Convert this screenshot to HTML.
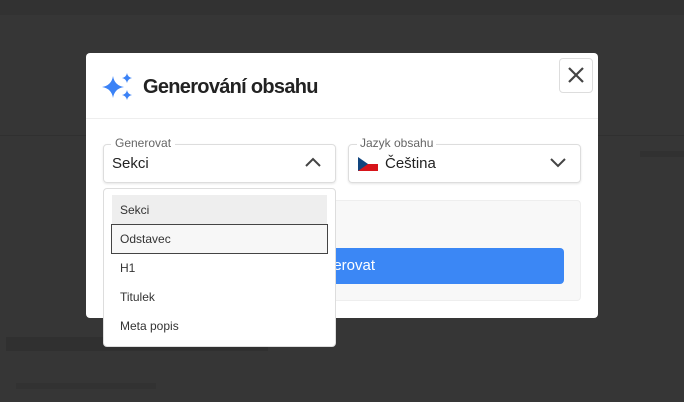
<html><head><style>
body{margin:0;width:684px;height:402px;background:#363636;font-family:"Liberation Sans",sans-serif;position:relative;overflow:hidden}
.a{position:absolute}
</style></head><body>
<div class="a" style="left:0;top:0;width:684px;height:15px;background:#323232"></div>
<div class="a" style="left:0;top:135px;width:684px;height:1px;background:#303030"></div>
<div class="a" style="left:640px;top:151px;width:44px;height:6px;background:#313131"></div>
<div class="a" style="left:6px;top:337px;width:262px;height:14px;background:#303030"></div>
<div class="a" style="left:16px;top:383px;width:140px;height:6px;background:#323232"></div>
<div class="a" style="left:86px;top:53px;width:512px;height:265px;background:#fff;border-radius:4px">
 <div class="a" style="left:0;top:65px;width:512px;height:1px;background:#eee"></div>
 <svg class="a" style="left:16px;top:20px" width="34" height="30" viewBox="0 0 34 30"><path d="M11 3 Q12.5 12.5 22 14 Q12.5 15.5 11 25 Q9.5 15.5 0 14 Q9.5 12.5 11 3Z" fill="#3b82f6"/><path d="M25 0 Q25.8 4.2 30 5 Q25.8 5.8 25 10 Q24.2 5.8 20 5 Q24.2 4.2 25 0Z" fill="#3b82f6"/><path d="M25 17 Q25.8 21.2 30 22 Q25.8 22.8 25 27 Q24.2 22.8 20 22 Q24.2 21.2 25 17Z" fill="#3b82f6"/></svg>
 <div class="a" style="left:57px;top:23px;font-size:20px;font-weight:bold;color:#222;letter-spacing:-0.7px">Generování obsahu</div>
 <div class="a" style="left:473px;top:5px;width:32px;height:33px;border:1px solid #ddd;border-radius:4px"><svg width="32" height="33"><path d="M9 9L23 23M23 9L9 23" stroke="#444" stroke-width="2.2"/></svg></div>
 <div class="a" style="left:17px;top:91px;width:231px;height:37px;border:1px solid #ddd;border-radius:4px;box-shadow:0 1px 2px rgba(0,0,0,.1)"></div>
 <div class="a" style="left:25px;top:83px;background:#fff;padding:0 4px;font-size:12px;color:#666">Generovat</div>
 <div class="a" style="left:26px;top:102px;font-size:15px;color:#222">Sekci</div>
 <svg class="a" style="left:218px;top:103px" width="18" height="12"><path d="M2 10L9 3L16 10" stroke="#444" stroke-width="2" fill="none"/></svg>
 <div class="a" style="left:262px;top:91px;width:231px;height:37px;border:1px solid #ddd;border-radius:4px;box-shadow:0 1px 2px rgba(0,0,0,.1)"></div>
 <div class="a" style="left:271px;top:83px;background:#fff;padding:0 3px;font-size:12px;color:#666">Jazyk obsahu</div>
 <svg class="a" style="left:272px;top:104px" width="20" height="14"><rect width="20" height="7" fill="#fff"/><rect y="7" width="20" height="7" fill="#d7141a"/><path d="M0 0L10 7L0 14Z" fill="#11457e"/></svg>
 <div class="a" style="left:299px;top:102px;font-size:15px;color:#222">Čeština</div>
 <svg class="a" style="left:463px;top:103px" width="18" height="12"><path d="M2 3L9 10L16 3" stroke="#444" stroke-width="2" fill="none"/></svg>
 <div class="a" style="left:17px;top:147px;width:476px;height:99px;background:#f8f8f8;border:1px solid #eee;border-radius:4px"></div>
 <div class="a" style="left:30px;top:195px;width:448px;height:36px;background:#3b87f5;border-radius:4px;color:#fff;font-size:15px;line-height:36px;text-align:center">Generovat</div>
</div>
<div class="a" style="left:103px;top:188px;width:231px;height:157px;background:#fff;border:1px solid #ddd;border-radius:4px;font-size:12px;color:#333">
 <div class="a" style="left:8px;top:6px;width:215px;height:29px;background:#eee"></div>
 <div class="a" style="left:7px;top:35px;width:215px;height:28px;background:#f7f7f7;border:1px solid #444"></div>
 <div class="a" style="left:16px;top:14px">Sekci</div>
 <div class="a" style="left:16px;top:43px">Odstavec</div>
 <div class="a" style="left:16px;top:72px">H1</div>
 <div class="a" style="left:16px;top:101px">Titulek</div>
 <div class="a" style="left:16px;top:130px">Meta popis</div>
</div>
</body></html>
